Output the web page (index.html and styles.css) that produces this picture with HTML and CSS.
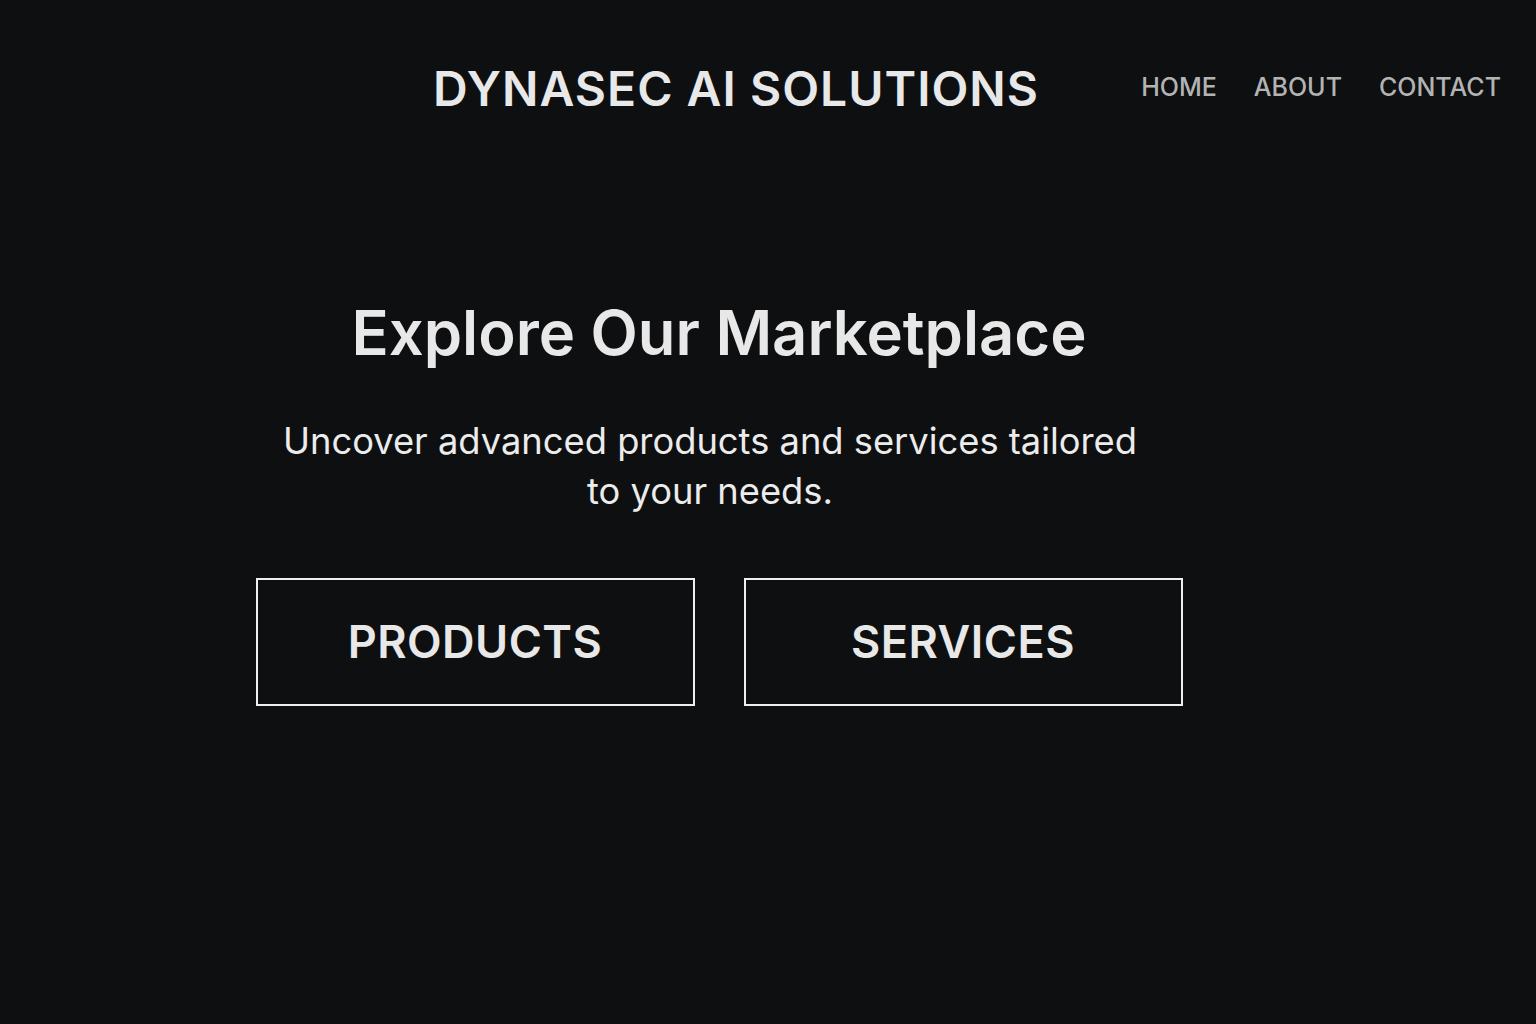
FILE: index.html
```html
<!DOCTYPE html>
<html lang="en">
<head>
<meta charset="utf-8">
<title>Dynasec AI Solutions</title>
<link rel="stylesheet" href="styles.css">
</head>
<body>
<header class="site-header">
  <div class="brand">DYNASEC AI SOLUTIONS</div>
  <nav class="nav">
    <a href="#" class="nav-link">HOME</a>
    <a href="#" class="nav-link">ABOUT</a>
    <a href="#" class="nav-link">CONTACT</a>
  </nav>
</header>
<main class="hero">
  <h1 class="hero-title">Explore Our Marketplace</h1>
  <p class="hero-sub">Uncover advanced products and services tailored<br>to your needs.</p>
  <div class="actions">
    <a href="#" class="btn">PRODUCTS</a>
    <a href="#" class="btn">SERVICES</a>
  </div>
</main>
</body>
</html>
```

FILE: styles.css
```css
* { box-sizing: border-box; }
html, body {
  margin: 0;
  height: 100%;
}
body {
  background: #0e0f11;
  color: #e6e6e6;
  font-family: Inter, "Noto Sans", "Liberation Sans", sans-serif;
}
.site-header {
  display: flex;
  align-items: center;
  justify-content: space-between;
  padding: 62px 35px 0 433px;
  height: 116px;
}
.brand {
  font-size: 48px;
  font-weight: 600;
  letter-spacing: 1px;
  color: #e8e8e8;
  line-height: 1;
}
.nav {
  display: flex;
  gap: 37px;
  padding-bottom: 4px;
}
.nav-link {
  color: #b3b3b3;
  text-decoration: none;
  font-size: 25px;
  font-weight: 500;
  line-height: 1;
}
.hero {
  width: 1438px;
  display: flex;
  flex-direction: column;
  align-items: center;
  padding-top: 186px;
}
.hero-title {
  margin: 0;
  font-size: 61.5px;
  font-weight: 600;
  line-height: 1;
  color: #e8e8e8;
}
.hero-sub {
  margin: 52px 0 0;
  padding-right: 18px;
  font-size: 36.3px;
  font-weight: 400;
  line-height: 50px;
  text-align: center;
  color: #ececec;
}
.actions {
  display: flex;
  gap: 49px;
  margin-top: 62px;
}
.btn {
  width: 439px;
  height: 128px;
  border: 2px solid #f0f0f0;
  display: flex;
  align-items: center;
  justify-content: center;
  text-decoration: none;
  color: #e8e8e8;
  font-size: 45px;
  font-weight: 600;
  letter-spacing: 0.5px;
}
```
